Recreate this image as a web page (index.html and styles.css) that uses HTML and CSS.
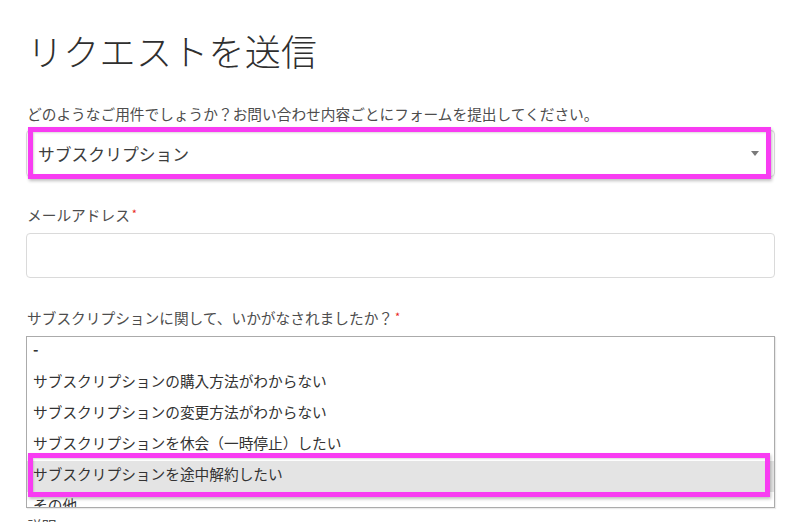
FILE: index.html
```html
<!DOCTYPE html>
<html lang="ja">
<head>
<meta charset="utf-8">
<title>リクエストを送信</title>
<link rel="stylesheet" href="styles.css">
</head>
<body>
<main class="page">
  <h1 class="title">リクエストを送信</h1>

  <div class="field field-first">
    <label class="label">どのようなご用件でしょうか？お問い合わせ内容ごとにフォームを提出してください。</label>
    <div class="select">
      <span class="select-text">サブスクリプション</span>
      <span class="caret"></span>
      <span class="mark mark-select"></span>
    </div>
  </div>

  <div class="field">
    <label class="label">メールアドレス<span class="req">*</span></label>
    <div class="input"></div>
  </div>

  <div class="field field-third">
    <label class="label">サブスクリプションに関して、いかがなされましたか？<span class="req">*</span></label>
    <div class="listbox">
      <div class="option option-dash">-</div>
      <div class="option">サブスクリプションの購入方法がわからない</div>
      <div class="option">サブスクリプションの変更方法がわからない</div>
      <div class="option">サブスクリプションを休会（一時停止）したい</div>
      <div class="option option-active">サブスクリプションを途中解約したい</div>
      <div class="option">その他</div>
      <span class="mark mark-option"></span>
    </div>
  </div>

  <div class="field field-last">
    <label class="label">説明</label>
  </div>
</main>
</body>
</html>
```

FILE: styles.css
```css
html, body {
  margin: 0;
  padding: 0;
  background: #ffffff;
}

body {
  font-family: "Noto Sans CJK JP", "Noto Sans", "Liberation Sans", sans-serif;
  color: #333333;
  overflow: hidden;
}

.page {
  padding: 28px 25px 0 26px;
  width: 749px;
}

.title {
  margin: 0;
  font-size: 36px;
  line-height: 44px;
  font-weight: 300;
  color: #2f2f2f;
  letter-spacing: 0.3px;
  padding-left: 1px;
}

.field {
  display: flex;
  flex-direction: column;
  margin-top: 28px;
}

.field-first {
  margin-top: 32px;
}

.field-third {
  margin-top: 30px;
}

.field-last {
  margin-top: 8px;
}

.label {
  display: block;
  font-size: 14.7px;
  line-height: 20px;
  height: 20px;
  color: #4d4d4d;
  padding-left: 1px;
}

.req {
  position: relative;
  top: -3px;
  color: #e8251b;
  font-size: 11px;
  line-height: 0;
  margin-left: 2px;
}

.select {
  position: relative;
  margin-top: 6px;
  height: 45px;
  border: 1px solid #d9d9d9;
  border-radius: 4px;
  box-shadow: 0 1px 2px rgba(0, 0, 0, 0.06);
  display: flex;
  align-items: center;
  padding: 0 12px 0 11px;
}

.select-text {
  flex: 1;
  font-size: 16.8px;
  color: #3d3d3d;
  line-height: 24px;
}

.caret {
  width: 0;
  height: 0;
  border-left: 4.5px solid transparent;
  border-right: 4.5px solid transparent;
  border-top: 5px solid #7a7a7a;
  margin-right: 3px;
}

.input {
  margin-top: 8px;
  height: 43px;
  border: 1px solid #dadada;
  border-radius: 4px;
}

.listbox {
  position: relative;
  margin-top: 8px;
  height: 170px;
  border: 1px solid #ababab;
  box-shadow: 1px 1px 1px rgba(0, 0, 0, 0.08);
  overflow: hidden;
}

.option {
  font-size: 14.7px;
  line-height: 21px;
  height: 21px;
  padding: 2px 7px 8px 6px;
  color: #333333;
  white-space: nowrap;
}

.option-dash {
  font-weight: 700;
  padding-top: 1px;
  padding-bottom: 9px;
}

.option-active {
  background: #e4e4e4;
}

.mark {
  position: absolute;
  border: 5px solid #f83cf2;
  box-sizing: border-box;
  box-shadow: 1px 2px 3px rgba(0, 0, 0, 0.25), inset 1px 1px 2px rgba(0, 0, 0, 0.15);
  pointer-events: none;
}

.mark-select {
  left: 1px;
  top: -4px;
  width: 743px;
  height: 52px;
}

.mark-option {
  left: 1px;
  top: 116px;
  width: 742px;
  height: 44px;
}
```
